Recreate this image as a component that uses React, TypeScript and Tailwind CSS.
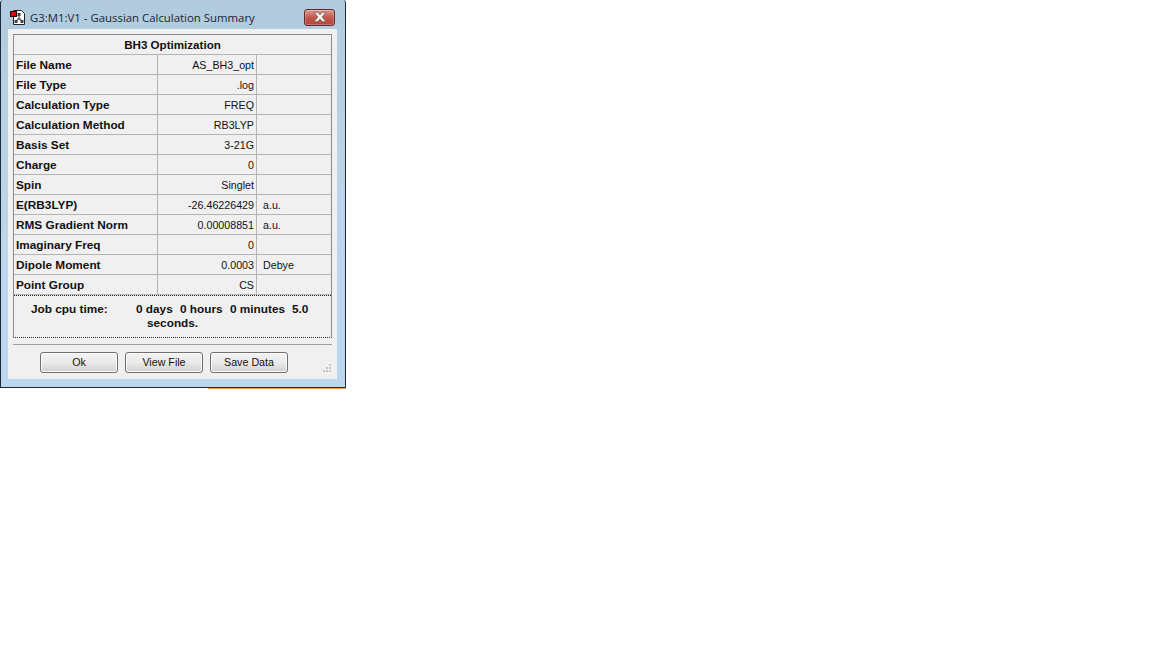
const rows = [
  ['File Name', 'AS_BH3_opt', ''],
  ['File Type', '.log', ''],
  ['Calculation Type', 'FREQ', ''],
  ['Calculation Method', 'RB3LYP', ''],
  ['Basis Set', '3-21G', ''],
  ['Charge', '0', ''],
  ['Spin', 'Singlet', ''],
  ['E(RB3LYP)', '-26.46226429', 'a.u.'],
  ['RMS Gradient Norm', '0.00008851', 'a.u.'],
  ['Imaginary Freq', '0', ''],
  ['Dipole Moment', '0.0003', 'Debye'],
  ['Point Group', 'CS', ''],
]

function FileIcon() {
  return (
    <svg width="17" height="17" viewBox="0 0 17 17" className="shrink-0">
      <path d="M3.5 1.500h8l3 3v11h-11z" fill="#fff" stroke="#222" />
      <path d="M9 5v4M9 9l-3 3.500M9 9l3 3.500" stroke="#555" strokeWidth="1.2" fill="none" />
      <rect x="7.500" y="4" width="3" height="3" fill="#444" />
      <rect x="4.500" y="11" width="3" height="3" fill="#444" />
      <rect x="10.500" y="11" width="3" height="3" fill="#444" />
      <rect x="0.500" y="2.500" width="6" height="5" fill="#e00010" stroke="#300" />
    </svg>
  )
}

function CloseButton() {
  return (
    <div className="flex h-[17px] w-[31px] items-center justify-center rounded-[3px] border border-[#5e2a2e] bg-gradient-to-b from-[#dc9a90] via-[#c0584e] to-[#b4453c] shadow-[inset_0_0_0_1px_rgba(255,255,255,0.25)]">
      <svg width="16" height="12" viewBox="0 0 13 10">
        <path d="M1.500 1h3l2 2.200 2-2.200h3L8.300 5l3.200 4h-3L6.500 6.800 4.500 9h-3l3.200-4z" fill="#f4f4f4" stroke="#6a4a4a" strokeWidth="0.6" />
      </svg>
    </div>
  )
}

function DialogButton({ label }: { label: string }) {
  return (
    <button
      type="button"
      className="h-[21px] w-[78px] rounded-[3px] border border-[#707070] bg-gradient-to-b from-[#f2f2f2] via-[#ebebeb] to-[#cfcfcf] text-[10.7px] leading-none text-[#111] shadow-[inset_0_0_0_1px_#fafafa]"
    >
      {label}
    </button>
  )
}

function Grip() {
  return (
    <svg width="9" height="9" viewBox="0 0 9 9" className="mt-[12px] ml-auto">
      <g fill="#c4c4c4">
        <rect x="6" y="0" width="2" height="2" />
        <rect x="3" y="3" width="2" height="2" />
        <rect x="6" y="3" width="2" height="2" />
        <rect x="0" y="6" width="2" height="2" />
        <rect x="3" y="6" width="2" height="2" />
        <rect x="6" y="6" width="2" height="2" />
      </g>
    </svg>
  )
}

export default function App() {
  return (
    <div className="h-[648px] w-[1152px] bg-white font-['Liberation_Sans',Arial,sans-serif]">
      <div className="flex h-[388px] w-[346px] flex-col rounded-t-[3px] border-x border-b border-[#1c2a38] bg-gradient-to-b from-[#b0cade] via-[#bcd5ea] to-[#bcd6f0]">
        <div className="flex h-[29px] shrink-0 items-center pt-[6px] pr-[10px] pl-[9px]">
          <FileIcon />
          <span className="ml-[3px] font-['Open_Sans',sans-serif] text-[11.4px] text-[#1c2530]">
            G3:M1:V1 - Gaussian Calculation Summary
          </span>
          <div className="mt-[-1px] ml-auto">
            <CloseButton />
          </div>
        </div>

        <div className="mr-[8px] ml-[7px] flex h-[350px] flex-col bg-[#f0f0f0] px-[5px] pt-[5px] text-[#111]">
          <div className="flex h-[304px] flex-col border border-[#8a8a8a] border-b-[#333] [border-bottom-style:dotted]">
            <div className="flex h-[20px] shrink-0 items-center justify-center border-b border-[#b4b4b4] pt-[1px] text-[11.600px] font-bold">
              BH3 Optimization
            </div>
            {rows.map(([name, value, unit]) => (
              <div key={name} className="flex h-[20px] shrink-0 border-b border-[#b4b4b4] last:border-b-0">
                <div className="flex w-[144px] items-center border-r border-[#b4b4b4] pt-[2px] pl-[2px] text-[11.8px] font-bold">{name}</div>
                <div className="flex w-[99px] items-center justify-end border-r border-[#b4b4b4] pt-[1px] pr-[2px] text-[10.7px]">{value}</div>
                <div className="flex flex-1 items-center pt-[1px] pl-[6px] text-[10.7px]">{unit}</div>
              </div>
            ))}
            <div className="flex flex-1 flex-col border-t border-dotted border-t-[#222] pt-[6px] text-[11.8px] leading-[14px] font-bold">
              <div className="flex pl-[17px]">
                <span className="w-[105px]">Job cpu time:</span>
                <span className="w-[44px]">0 days</span>
                <span className="w-[50px]">0 hours</span>
                <span className="w-[62px]">0 minutes</span>
                <span>5.0</span>
              </div>
              <div className="pl-[133px]">seconds.</div>
            </div>
          </div>

          <div className="mt-[6px] border-t border-[#a0a0a0]" />
          <div className="mt-[7px] flex gap-[7px] pl-[27px]">
            <DialogButton label="Ok" />
            <DialogButton label="View File" />
            <DialogButton label="Save Data" />
            <Grip />
          </div>
        </div>
      </div>
      <div className="ml-[208px] h-px w-[138px] bg-[#e8a468]" />
    </div>
  )
}
